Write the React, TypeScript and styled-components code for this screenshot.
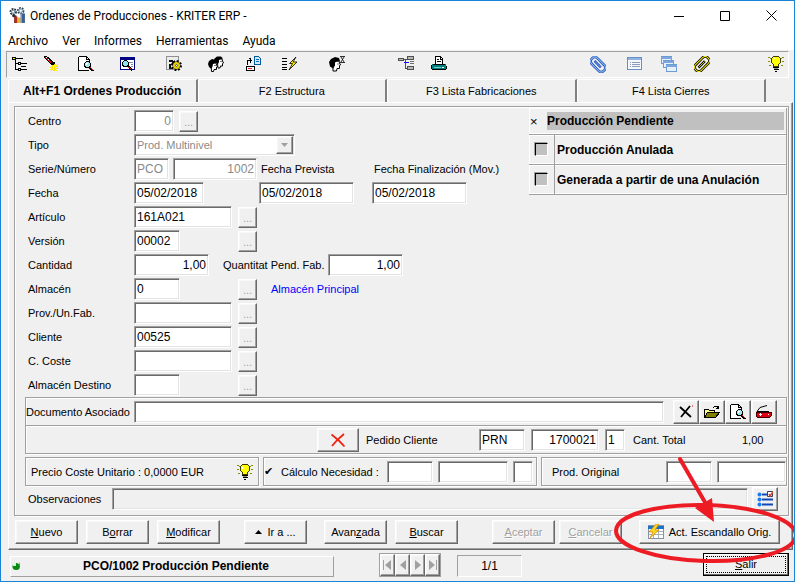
import React from "react";
import styled, { createGlobalStyle, css } from "styled-components";

const GlobalStyle = createGlobalStyle`
  * { box-sizing: border-box; }
  body {
    margin: 0;
    background: #fff;
    color: #000;
    font: 11px/14px "Liberation Sans", Arial, sans-serif;
  }
  button, input, select { font: inherit; color: inherit; margin: 0; }
`;

/* ---------- bevels ---------- */

const raised = css`
  border: 1px solid;
  border-color: #fff #696969 #696969 #fff;
  box-shadow: inset -1px -1px #a0a0a0, inset 1px 1px #f8f8f8;
`;
const sunken = css`
  border: 1px solid;
  border-color: #a0a0a0 #fff #fff #a0a0a0;
  box-shadow: inset 1px 1px #696969, inset -1px -1px #e3e3e3;
`;
const etched = css`
  border: 1px solid #a0a0a0;
  box-shadow: inset 1px 1px #fff, 1px 1px #fff;
`;

/* ---------- window frame ---------- */

const Window = styled.main`
  position: relative;
  overflow: hidden;
  border: 1px solid #1883d7;
  background: #f0f0f0;
`;
const TitleBar = styled.header`
  display: flex;
  align-items: center;
  height: 29px;
  padding-left: 8px;
  background: #fff;
  font: 12px/16px Roboto, "Open Sans", sans-serif;
`;
const Title = styled.h1`
  flex: 1;
  margin: 0 0 0 4px;
  font: inherit;
`;
const CaptionButton = styled.button`
  display: flex;
  align-items: center;
  justify-content: center;
  width: 46px;
  height: 28px;
  padding: 0;
  border: 0;
  background: none;
`;
const MenuBar = styled.nav`
  display: flex;
  gap: 14px;
  height: 20px;
  padding: 2px 7px 0;
  background: #fff;
  font: 12px/16px Roboto, "Open Sans", sans-serif;
`;
const MenuItem = styled.button`
  padding: 0;
  border: 0;
  background: none;
`;

const ToolBar = styled.div`
  display: flex;
  align-items: center;
  height: 27px;
  margin: 1px 5px 0;
  padding: 0 4px 0 5px;
  border: 1px solid;
  border-color: #a0a0a0 #fff #fff #a0a0a0;
`;
const Tool = styled.button<{ $gap: number; $push?: boolean }>`
  display: flex;
  width: 16px;
  height: 18px;
  margin-right: ${(p) => p.$gap}px;
  margin-left: ${(p) => (p.$push ? "auto" : "0")};
  padding: 0;
  border: 0;
  background: none;
`;

/* ---------- tabs ---------- */

const Tabs = styled.div`
  display: flex;
  height: 23px;
  margin: 1px 28px 0 7px;
`;
const Tab = styled.button<{ $active?: boolean }>`
  flex: 1;
  padding: 0;
  border: 0;
  border-top: 1px solid #fff;
  border-left: 1px solid #fff;
  border-right: 2px solid #808080;
  border-radius: 3px 0 0 0;
  background: #f0f0f0;
  font-size: ${(p) => (p.$active ? "12px" : "11px")};
  font-weight: ${(p) => (p.$active ? "bold" : "normal")};
`;
const TabPage = styled.div`
  margin: 0 1px 0 7px;
  padding: 3px 3px 5px 5px;
  border: 1px solid;
  border-color: #fff #696969 #696969 #fff;
  box-shadow: inset -1px -1px #a0a0a0;
`;
const Sheet = styled.section`
  padding: 0 1px 4px 10px;
  ${etched}
`;
const Columns = styled.div`
  display: flex;
  align-items: flex-start;
  justify-content: space-between;
`;

/* ---------- form ---------- */

const FormRows = styled.div`
  padding: 2px 0 0 3px;
`;
const FormRow = styled.div`
  display: flex;
  align-items: center;
  height: 24px;
`;
const RowLabel = styled.label`
  width: 106px;
`;
const Slot = styled.div<{ $width: number }>`
  display: flex;
  gap: 4px;
  width: ${(p) => p.$width}px;
`;
const Label = styled.label<{ $width?: number }>`
  width: ${(p) => (p.$width ? p.$width + "px" : "auto")};
  white-space: nowrap;
`;
const Text = styled.input<{ $w?: number; $right?: boolean }>`
  ${(p) => (p.$w ? `width: ${p.$w}px;` : "flex: 1; min-width: 0;")}
  height: 22px;
  padding: 0 2px;
  ${sunken}
  border-radius: 0;
  outline: 0;
  background: #fff;
  font-size: 12px;
  text-align: ${(p) => (p.$right ? "right" : "left")};
  &:disabled { color: #8a8a8a; }
  &[readonly] { background: #f0f0f0; }
`;
const SelectBox = styled.div`
  position: relative;
  width: 161px;
`;
const Select = styled.select`
  display: block;
  width: 100%;
  height: 22px;
  padding: 0 2px;
  appearance: none;
  border-radius: 0;
  background: #fff;
  ${sunken}
  &:disabled { color: #8a8a8a; opacity: 1; }
`;
const SelectArrow = styled.span`
  position: absolute;
  top: 2px;
  right: 2px;
  bottom: 2px;
  display: flex;
  align-items: center;
  justify-content: center;
  width: 17px;
  background: #f0f0f0;
  pointer-events: none;
  ${raised}
`;
const LookupButton = styled.button`
  width: 19px;
  height: 21px;
  padding: 2px 0 0;
  background: #f0f0f0;
  color: #a0a0a0;
  line-height: 12px;
  ${raised}
`;
const StoreName = styled.output`
  margin-left: 14px;
  color: #00f;
`;

/* ---------- state panel ---------- */

const StatePanel = styled.div`
  width: 258px;
  margin-top: 1px;
  border-right: 1px solid #a0a0a0;
`;
const StateRow = styled.label<{ $head?: boolean }>`
  display: flex;
  align-items: stretch;
  height: ${(p) => (p.$head ? "27px" : "30px")};
  border-bottom: 1px solid #a0a0a0;
  box-shadow: inset 0 -1px #fff, inset 1px 1px #fff;
  font-size: 12px;
  font-weight: bold;
`;
const StateCell = styled.span<{ $line?: boolean }>`
  display: flex;
  align-items: center;
  justify-content: ${(p) => (p.$line ? "center" : "flex-start")};
  width: ${(p) => (p.$line ? "26px" : "18px")};
  border-right: ${(p) => (p.$line ? "1px solid #a0a0a0" : "0")};
`;
const StateText = styled.span<{ $selected?: boolean }>`
  display: flex;
  flex: 1;
  align-items: center;
  margin: 4px 2px 4px 0;
  padding-left: ${(p) => (p.$selected ? "0" : "2px")};
  background: ${(p) => (p.$selected ? "#c0c0c0" : "none")};
`;
const StateCheck = styled.input`
  width: 13px;
  height: 13px;
  margin: 0;
  appearance: none;
  border: 1px solid;
  border-color: #000 #fff #fff #000;
  box-shadow: -1px -1px #a0a0a0;
  background: #c0c0c0;
  &:checked {
    border-color: transparent;
    box-shadow: none;
    background: none;
  }
  &:checked::before {
    content: "×";
    display: block;
    font: 13px/11px "Liberation Sans", sans-serif;
  }
`;

/* ---------- lower blocks ---------- */

const Block = styled.div`
  display: flex;
  align-items: center;
  height: 29px;
  ${etched}
`;
const DocBlock = styled(Block)`
  padding: 0 9px 0 0;
`;
const OrderBlock = styled(Block)`
  justify-content: flex-end;
  margin-top: -1px;
  padding-right: 17px;
`;
const Total = styled.output`
  width: 78px;
  padding-left: 51px;
`;
const Group = styled.div`
  display: flex;
  gap: 4px;
  margin-top: 3px;
`;
const GroupBox = styled(Block)<{ $grow?: boolean; $w?: number }>`
  ${(p) => (p.$grow ? "flex: 1;" : `width: ${p.$w}px;`)}
  gap: 5px;
`;
const Spread = styled.span<{ $indent: number }>`
  flex: 1;
  padding-left: ${(p) => p.$indent}px;
`;
const NeedCheck = styled.input`
  width: 12px;
  height: 12px;
  margin: 0;
  appearance: none;
  &:checked::before {
    content: "✔";
    display: block;
    font: 11px/12px "DejaVu Sans", sans-serif;
  }
`;
const Notes = styled.div`
  display: flex;
  align-items: center;
  gap: 4px;
  margin-top: 1px;
  padding: 0 9px 0 3px;
`;
const IconButton = styled.button<{ $w: number }>`
  display: flex;
  align-items: center;
  justify-content: center;
  width: ${(p) => p.$w}px;
  height: 24px;
  padding: 0;
  background: #f0f0f0;
  ${raised}
`;
const PlainButton = styled.button`
  display: flex;
  width: 16px;
  margin-right: 5px;
  padding: 0;
  border: 0;
  background: none;
`;

/* ---------- actions and status ---------- */

const Actions = styled.div`
  display: flex;
  gap: 24px;
  margin: 4px 9px 0 1px;
`;
const ActionSet = styled.div<{ $gap: number; $push?: boolean }>`
  display: flex;
  gap: ${(p) => p.$gap}px;
  margin-left: ${(p) => (p.$push ? "auto" : "0")};
`;
const Action = styled.button<{ $wide?: boolean }>`
  display: flex;
  align-items: center;
  justify-content: center;
  gap: 5px;
  width: ${(p) => (p.$wide ? "141px" : "63px")};
  height: 24px;
  padding: 0;
  background: #f0f0f0;
  white-space: nowrap;
  ${raised}
  &:disabled { color: #a0a0a0; text-shadow: 1px 1px #fff; }
`;
const StatusBar = styled.footer`
  display: flex;
  align-items: center;
  height: 31px;
  padding: 0 5px 2px 9px;
`;
const StatusText = styled.div`
  display: flex;
  align-items: center;
  flex: 1;
  max-width: 324px;
  height: 21px;
  margin-top: 3px;
  padding: 0 2px 0 1px;
  border: 1px solid;
  border-color: #fff #a0a0a0 #a0a0a0 #fff;
  font-size: 12px;
  font-weight: bold;
  strong { flex: 1; text-align: center; }
`;
const Navigator = styled.div`
  display: flex;
  margin-left: 45px;
  border: 1px solid #a0a0a0;
`;
const NavButton = styled.button`
  display: flex;
  align-items: center;
  justify-content: center;
  width: 15px;
  height: 22px;
  padding: 0;
  background: #f0f0f0;
  ${raised}
`;
const Counter = styled.output`
  width: 65px;
  height: 22px;
  margin: 3px auto 0 16px;
  border: 1px solid;
  border-color: #a0a0a0 #fff #fff #a0a0a0;
  font-size: 12px;
  line-height: 20px;
  text-align: center;
`;
const ExitButton = styled.button`
  width: 86px;
  height: 23px;
  padding: 1px;
  border: 1px solid #000;
  background: #f0f0f0;
  box-shadow: inset -1px -1px #696969, inset 1px 1px #fff;
  span {
    display: block;
    margin: 0 1px;
    border: 1px dotted #000;
    line-height: 15px;
  }
`;
const Callout = styled.svg`
  position: absolute;
  right: -1px;
  bottom: 10px;
  pointer-events: none;
`;

/* ---------- icons ---------- */

type Art = { children: React.ReactNode; size?: number; soft?: boolean };
const Icon = ({ children, size = 16, soft }: Art) => (
  <svg width={size} height={size} viewBox="0 0 16 16" fill="none" stroke="#000" aria-hidden="true"
    shapeRendering={soft ? "auto" : "crispEdges"}>
    {children}
  </svg>
);

const AppIcon = () => (
  <Icon size={17} soft>
    <circle cx="4" cy="4.500" r="2.500" strokeWidth="2" stroke="#24303c" strokeDasharray="1.600 .9" />
    <circle cx="4" cy="4.500" r="1.500" stroke="#7e97a8" />
    <circle cx="11" cy="3.500" r="2.500" strokeWidth="2" stroke="#31485c" strokeDasharray="1.600 .9" />
    <circle cx="11" cy="3.500" r="1.500" stroke="#9ab4c6" />
    <path d="M3 7l4 1v7H5V10L3 9z" fill="#2b2b33" stroke="none" />
    <path d="M5 9h3v6H5z" fill="#b5261e" stroke="none" />
    <path d="M8 10h3v5H8z" fill="#e9b526" stroke="none" />
    <path d="M11 6h4v9h-4z" fill="#3d5f8f" stroke="none" />
    <path d="M11 6h1v9h-1z" fill="#8fb0d6" stroke="none" />
  </Icon>
);
const TreeIcon = () => (
  <Icon>
    <path d="M.5 1.500h3v2h-3zM4 2.500h7M3.500 4v9.500H6M3.500 7.500H6M6.500 6.500h2v2h-2zM9 7.500h6M6.500 12.500h2v2h-2zM9 13.500h6M9 10.500h5" />
    <path d="M1 2.500h2" stroke="#ff0" />
    <path d="M7 7.500h1M7 13.500h1" stroke="#fff" />
  </Icon>
);
const TorchIcon = () => (
  <Icon>
    <path d="M1 0h3v1h2v1h1v1h1v1h1v1h1v4H8V8H7V7H6V6H5V5H4V4H3V3H2V2H1z" fill="#000" stroke="none" />
    <path d="M2 1h2v1h1v1h1v1h1v1h1v2H7V6H6V5H5V4H4V3H3V2H2z" fill="#e01010" stroke="none" />
    <path d="M3 1.500h1M5 3.500h1" stroke="#fff" />
    <path d="M10 6h1v2h-1z" fill="#f0f0f0" stroke="#000" />
    <path d="M11 8.500h2m1 0h1M9 9.500h1m1 0h1m1 0h1M8 10.500h2m1 0h1m1 0h2M7 11.500h1m1 0h1m1 0h2m1 0h1M8 12.500h2m1 0h1m1 0h2M7 13.500h1m1 0h1m1 0h2M8 14.500h1m1 0h2m1 0h1" stroke="#ffe400" />
  </Icon>
);
const Lens = () => (
  <>
    <circle cx="9.500" cy="8.500" r="3" fill="#9fe8ee" />
    <path d="M8 7.500h2M8 8.500h1" stroke="#fff" />
    <path d="M11.500 11l3.500 4" strokeWidth="2" />
    <path d="M12 11.500h1M13 12.500h1M14 13.500h1" stroke="#e02020" />
  </>
);
const PreviewIcon = () => (
  <Icon>
    <path d="M.5.500h8l3 3V6M.5 1v13.500h10M8.500 1v2.500H12" />
    <path d="M1 1h7v13H1z" fill="#fff" stroke="none" />
    <Lens />
  </Icon>
);
const WindowSearchIcon = () => (
  <Icon>
    <path d="M.5 1.500h14v12H.5z" fill="#fff" stroke="#000080" />
    <path d="M0 2.500h15" stroke="#000080" strokeWidth="3" />
    <path d="M9 6.500h4M11 8.500h2M11 10.500h2" stroke="#8090a0" />
    <circle cx="5.500" cy="7.500" r="3" fill="#8ee3ea" />
    <path d="M8 10l4 4.500" strokeWidth="2" />
    <path d="M8 11.500h2M10 12.500h1" stroke="#d02020" />
  </Icon>
);
const GearFormIcon = () => (
  <Icon>
    <path d="M.5.500h12v13H.5z" fill="#ececec" stroke="#909090" />
    <path d="M3 4h4v1h1v3H6V6H3zM3 8h2v4h2v1H3z" fill="#111" stroke="none" />
    <g shapeRendering="auto">
      <circle cx="10.500" cy="9.500" r="4" stroke="#000" strokeWidth="3" strokeDasharray="1.700 1.400" />
      <circle cx="10.500" cy="9.500" r="3.500" stroke="#000" />
      <circle cx="10.500" cy="9.500" r="2.500" stroke="#e8cc00" strokeWidth="2" />
      <circle cx="10.500" cy="9.500" r="1" fill="#fff" strokeWidth=".6" />
    </g>
  </Icon>
);
const FacesIcon = () => (
  <Icon soft>
    <path d="M9 3h5l.5 2 1 2-1 .5V10h-2l-.5 2H10z" fill="#fff" />
    <path d="M6 3l3-2.500h4l2 2-2 .5-2 1v2l-1 2-2-1z" fill="#000" stroke="none" />
    <path d="M3 7h5l.5 2 1 1.500-1 .5v2.500H6l-.5 2H3.500z" fill="#fff" />
    <path d="M0 8l1-3 3-2 4 1 1 2.500-2 .5-2 1-.5 2.500L3.500 13 1 11z" fill="#000" stroke="none" />
    <path d="M12.500 5.500h1M6.500 9.500h1" />
  </Icon>
);
const SendDocIcon = () => (
  <Icon>
    <path d="M9.500.5h4l2 2v6h-6z" fill="#cfe8ff" stroke="#005c9c" />
    <path d="M11 3.500h3M11 5.500h3" stroke="#0068b0" />
    <path d="M2.500 9V4.500H6M4 2.500h1v4M5.500 3v3M6.500 4v1" />
    <path d="M1.500 10.500h8v4h-8z" fill="#fff" />
    <path d="M3 12.500h4" stroke="#e02020" />
  </Icon>
);
const BoltListIcon = () => (
  <Icon>
    <path d="M0 2.500h5M0 5.500h5M0 8.500h5M0 11.500h5M0 13.500h5" />
    <path d="M14 1L7.500 7.500h3L7 14l8-8h-4z" fill="#ffee00" strokeWidth=".8" shapeRendering="auto" />
  </Icon>
);
const HeadTimeIcon = () => (
  <Icon soft>
    <path d="M4 5h6l.5 2 1 2-1 .5v3H8l-.5 2.500H4z" fill="#fff" />
    <path d="M0 6l2-3 4-2 4 1 1 3-3 .5-2 1v3l-2 3-3-2z" fill="#000" stroke="none" />
    <path d="M8.500 8h1" />
    <path d="M11 .5h5M11 6.500h5M12 1l3 5M15 1l-3 5" strokeWidth=".8" />
  </Icon>
);
const SchemeIcon = () => (
  <Icon>
    <path d="M.5 2.500h5v2h-5zM9.500.5h6v3h-6zM9.500 10.500h6v3h-6z" fill="#b8b8b8" stroke="#505050" />
    <path d="M6 3.500h3M7.500 4v8H9" stroke="#505050" />
    <path d="M6 6.500h5" stroke="#1010ff" />
    <path d="M12 5.500h4v2h-4" stroke="#707070" />
  </Icon>
);
const PrinterIcon = () => (
  <Icon>
    <path d="M4.500 8V.5h5l2 2V8" fill="#fff" />
    <path d="M6 3.500h2M6 5.500h4M9.500 1v2H11" />
    <path d="M1 8h14v5H1z" fill="#008080" stroke="none" />
    <path d="M2 8.500h12M0 9v4M.5 10v3M15.500 10v3M1 13.500h14" />
    <path d="M3 11.500h7" stroke="#70d0d0" />
    <path d="M11 11.500h2" stroke="#fff" />
  </Icon>
);
const Clip = ({ dark, light, angle }: { dark: string; light: string; angle: number }) => (
  <g transform={`rotate(${angle} 8 8)`}>
    <rect x="-.5" y="4" width="17" height="8" rx="3.500" stroke={dark} strokeWidth="2.600" />
    <path d="M3 8h9" stroke={dark} strokeWidth="2.400" />
    <rect x="-.5" y="4" width="17" height="8" rx="3.500" stroke={light} strokeWidth="1" />
    <path d="M3.500 8h8" stroke={light} strokeWidth=".8" />
  </g>
);
const BlueClipIcon = () => (
  <Icon size={17} soft><Clip dark="#2050b8" light="#8fbcf2" angle={45} /></Icon>
);
const YellowClipIcon = () => (
  <Icon soft><Clip dark="#000" light="#f8ec00" angle={-45} /></Icon>
);
const ListWindowIcon = () => (
  <Icon>
    <path d="M.5 1.500h14v12H.5z" fill="#f4f8fd" stroke="#6b8fc4" />
    <path d="M1 2.500h13M1 3.500h13" stroke="#8fb2e2" />
    <path d="M3 6.500h1m1 0h8M3 8.500h1m1 0h8M3 10.500h1m1 0h8" stroke="#8b9cb4" />
  </Icon>
);
const CascadeIcon = () => (
  <Icon>
    {[[0, 0], [2, 4], [5, 8]].map(([x, y]) => (
      <g key={x}>
        <path d={`M${x}.5 ${y}.5h10v7h-10z`} fill="#e6f0fb" stroke="#6f9bd4" />
        <path d={`M${x} ${y + 1}.5h11`} stroke="#7ba6de" strokeWidth="2" />
      </g>
    ))}
  </Icon>
);
const BulbIcon = () => (
  <Icon>
    <path d="M0 1.500h2M14 1.500h2M0 5.500h2M14 5.500h2M1 9.500h2M13 9.500h2M2 2.500h1M13 2.500h1" stroke="#8c8c00" />
    <path d="M5.500.5h5l2 2v4l-2 2v2h-5v-2l-2-2v-4z" fill="#ffff00" stroke="#3c3c00" />
    <path d="M6 2.500h1M5.500 3v2" stroke="#fff" />
    <path d="M5 11.500h6M6 13.500h5M7 15.500h2" />
    <path d="M6 12.500h4" stroke="#909090" />
  </Icon>
);
const DeleteIcon = () => (
  <Icon soft><path d="M2 3l11 10M12 2L3 13" strokeWidth="1.800" /><path d="M14 2h1" stroke="#e00" /></Icon>
);
const FolderIcon = () => (
  <Icon>
    <path d="M.5 13.500v-8h4l1 1h5v3" fill="#ffff80" />
    <path d="M.5 13.500l3-5h12l-4 5z" fill="#808000" />
    <path d="M9 3.500l2-1h2l1 2M12 4.500h3M14.500 2v3" />
  </Icon>
);
const ScannerIcon = () => (
  <Icon>
    <path d="M0 8h15v4l-1 1H1l-1-1z" fill="#e00010" stroke="#400" />
    <path d="M1 7.500l3-4 7-2M1 7.500h12" shapeRendering="auto" />
    <path d="M3 10.500h3M4.500 9v3M12 10.500h1" stroke="#fff" />
  </Icon>
);
const RedCrossIcon = () => (
  <Icon soft><path d="M1.500 2.500c4 3 8 6 13 12M14 2C9 6 5 10 2 14" stroke="#ee2211" strokeWidth="1.800" /></Icon>
);
const TaskListIcon = () => (
  <Icon soft>
    <path d="M5 3.500h5M5 8.500h11M5 13.500h11" stroke="#1048b8" strokeWidth="2" />
    <g fill="#1a7cf0" stroke="none"><circle cx="2.500" cy="3.500" r="2" /><circle cx="2.500" cy="8.500" r="2" /><circle cx="2.500" cy="13.500" r="2" /></g>
    <path d="M10.500.500h5v5h-5z" fill="#fff" stroke="#31435c" />
    <path d="M12 3l1 2 3-4" stroke="#e04020" strokeWidth="1.500" />
  </Icon>
);
const GridBoltIcon = () => (
  <Icon>
    <path d="M.5 1.500h15v13H.5z" fill="#fff" stroke="#8494a4" />
    <path d="M0 3h16" stroke="#1874c8" strokeWidth="3" />
    <path d="M1 7.500h14M1 10.500h14M5.500 5v9M10.500 5v9" stroke="#a8b0b8" />
    <path d="M8 0L1 8h4l-3 6 9-8H7l4-6z" fill="#ffd820" stroke="#d08000" strokeWidth=".7" shapeRendering="auto" />
  </Icon>
);
const LedIcon = () => (
  <svg width="9" height="9" viewBox="0 0 9 9" aria-hidden="true">
    <path d="M8 0v6L6 8H4z" fill="#888" />
    <circle cx="4" cy="4.500" r="3.500" fill="#078a12" />
    <path d="M1 1h3v3H1z" fill="#c8ffd0" />
  </svg>
);
const NavGlyph = ({ d }: { d: string }) => (
  <svg width="10" height="12" viewBox="0 0 10 12" fill="#a0a0a0" aria-hidden="true"><path d={d} /></svg>
);

/* ---------- data ---------- */

type ToolDef = [string, number, () => React.JSX.Element];
const leftTools: ToolDef[] = [
  ["Árbol", 15, TreeIcon],
  ["Buscar", 19, TorchIcon],
  ["Vista previa", 26, PreviewIcon],
  ["Consulta", 30, WindowSearchIcon],
  ["Parámetros", 26, GearFormIcon],
  ["Usuarios", 21, FacesIcon],
  ["Enviar", 21, SendDocIcon],
  ["Generar", 31, BoltListIcon],
  ["Pendientes", 53, HeadTimeIcon],
  ["Estructura", 17, SchemeIcon],
  ["Imprimir", 0, PrinterIcon],
];
const rightTools: ToolDef[] = [
  ["Adjuntar", 21, BlueClipIcon],
  ["Lista", 18, ListWindowIcon],
  ["Ventanas", 17, CascadeIcon],
  ["Documentos", 58, YellowClipIcon],
  ["Ayuda rápida", 0, BulbIcon],
];
const lookupRows = [
  { id: "proveedor", label: "Prov./Un.Fab.", value: "", width: 98 },
  { id: "cliente", label: "Cliente", value: "00525", width: 98 },
  { id: "coste", label: "C. Coste", value: "", width: 98 },
  { id: "destino", label: "Almacén Destino", value: "", width: 46 },
];

const LookupRow = (p: { id: string; label: string; value: string; width: number; children?: React.ReactNode }) => (
  <FormRow>
    <RowLabel htmlFor={p.id}>{p.label}</RowLabel>
    <Slot $width={104}><Text id={p.id} $w={p.width} defaultValue={p.value} /></Slot>
    <LookupButton aria-label={`Elegir ${p.label}`}>...</LookupButton>
    {p.children}
  </FormRow>
);

export default function App() {
  return (
    <>
      <GlobalStyle />
      <Window>
        <TitleBar>
          <AppIcon />
          <Title>Ordenes de Producciones - KRITER ERP -</Title>
          <CaptionButton aria-label="Minimizar">
            <svg width="10" height="10"><path d="M0 5.500h10" stroke="#000" /></svg>
          </CaptionButton>
          <CaptionButton aria-label="Maximizar">
            <svg width="10" height="10"><path d="M.5.5h9v9h-9z" stroke="#000" fill="none" /></svg>
          </CaptionButton>
          <CaptionButton aria-label="Cerrar">
            <svg width="11" height="11"><path d="M.5.5l10 10M10.500.5l-10 10" stroke="#000" /></svg>
          </CaptionButton>
        </TitleBar>
        <MenuBar>
          {["Archivo", "Ver", "Informes", "Herramientas", "Ayuda"].map((m) => (
            <MenuItem key={m}>{m}</MenuItem>
          ))}
        </MenuBar>
        <ToolBar role="toolbar">
          {leftTools.map(([name, gap, Glyph]) => (
            <Tool key={name} aria-label={name} $gap={gap}><Glyph /></Tool>
          ))}
          {rightTools.map(([name, gap, Glyph], i) => (
            <Tool key={name} aria-label={name} $gap={gap} $push={i === 0}><Glyph /></Tool>
          ))}
        </ToolBar>

        <Tabs role="tablist">
          <Tab role="tab" aria-selected="true" $active>Alt+F1 Ordenes Producción</Tab>
          <Tab role="tab">F2 Estructura</Tab>
          <Tab role="tab">F3 Lista Fabricaciones</Tab>
          <Tab role="tab">F4 Lista Cierres</Tab>
        </Tabs>

        <TabPage>
          <Sheet>
            <Columns>
              <FormRows>
                <FormRow>
                  <RowLabel htmlFor="centro">Centro</RowLabel>
                  <Slot $width={45}><Text id="centro" $w={40} $right disabled defaultValue="0" /></Slot>
                  <LookupButton aria-label="Elegir centro">...</LookupButton>
                </FormRow>
                <FormRow>
                  <RowLabel htmlFor="tipo">Tipo</RowLabel>
                  <SelectBox>
                    <Select id="tipo" disabled><option>Prod. Multinivel</option></Select>
                    <SelectArrow><svg width="7" height="4"><path d="M0 0h7L3.500 4z" fill="#a0a0a0" /></svg></SelectArrow>
                  </SelectBox>
                </FormRow>
                <FormRow>
                  <RowLabel htmlFor="serie">Serie/Número</RowLabel>
                  <Slot $width={127}>
                    <Text id="serie" $w={35} disabled defaultValue="PCO" />
                    <Text aria-label="Número" $w={84} $right disabled defaultValue="1002" />
                  </Slot>
                  <Label htmlFor="prevista" $width={113}>Fecha Prevista</Label>
                  <Label htmlFor="finalizacion">Fecha Finalización (Mov.)</Label>
                </FormRow>
                <FormRow>
                  <RowLabel htmlFor="fecha">Fecha</RowLabel>
                  <Slot $width={125}><Text id="fecha" $w={70} defaultValue="05/02/2018" /></Slot>
                  <Slot $width={113}><Text id="prevista" $w={95} defaultValue="05/02/2018" /></Slot>
                  <Text id="finalizacion" $w={95} defaultValue="05/02/2018" />
                </FormRow>
                <LookupRow id="articulo" label="Artículo" value="161A021" width={98} />
                <LookupRow id="version" label="Versión" value="00002" width={46} />
                <FormRow>
                  <RowLabel htmlFor="cantidad">Cantidad</RowLabel>
                  <Slot $width={89}><Text id="cantidad" $w={75} $right defaultValue="1,00" /></Slot>
                  <Label htmlFor="pendiente" $width={105}>Quantitat Pend. Fab.</Label>
                  <Text id="pendiente" $w={75} $right defaultValue="1,00" />
                </FormRow>
                <LookupRow id="almacen" label="Almacén" value="0" width={46}>
                  <StoreName>Almacén Principal</StoreName>
                </LookupRow>
                {lookupRows.map((r) => <LookupRow key={r.id} {...r} />)}
              </FormRows>

              <StatePanel>
                <StateRow $head>
                  <StateCell><StateCheck type="checkbox" defaultChecked /></StateCell>
                  <StateText $selected>Producción Pendiente</StateText>
                </StateRow>
                <StateRow>
                  <StateCell $line><StateCheck type="checkbox" /></StateCell>
                  <StateText>Producción Anulada</StateText>
                </StateRow>
                <StateRow>
                  <StateCell $line><StateCheck type="checkbox" /></StateCell>
                  <StateText>Generada a partir de una Anulación</StateText>
                </StateRow>
              </StatePanel>
            </Columns>

            <DocBlock>
              <Label htmlFor="documento" $width={108}>Documento Asociado</Label>
              <Text id="documento" />
              <Slot $width={9} />
              <IconButton $w={26} aria-label="Quitar documento"><DeleteIcon /></IconButton>
              <IconButton $w={26} aria-label="Abrir documento"><FolderIcon /></IconButton>
              <IconButton $w={26} aria-label="Ver documento"><PreviewIcon /></IconButton>
              <IconButton $w={26} aria-label="Escanear"><ScannerIcon /></IconButton>
            </DocBlock>
            <OrderBlock>
              <Slot $width={49}>
                <IconButton $w={42} aria-label="Quitar pedido"><RedCrossIcon /></IconButton>
              </Slot>
              <Label htmlFor="pedido" $width={113}>Pedido Cliente</Label>
              <Slot $width={52}><Text id="pedido" $w={46} defaultValue="PRN" /></Slot>
              <Slot $width={74}><Text aria-label="Número de pedido" $w={68} $right defaultValue="1700021" /></Slot>
              <Slot $width={28}><Text aria-label="Línea de pedido" $w={20} defaultValue="1" /></Slot>
              <Label $width={58}>Cant. Total</Label>
              <Total>1,00</Total>
            </OrderBlock>
            <Group>
              <GroupBox $w={234}>
                <Spread $indent={5}><Label>Precio Coste Unitario : 0,0000 EUR</Label></Spread>
                <PlainButton aria-label="Detalle de coste"><BulbIcon /></PlainButton>
              </GroupBox>
              <GroupBox $w={274}>
                <NeedCheck id="necesidad" type="checkbox" defaultChecked />
                <Label htmlFor="necesidad" $width={101}>Cálculo Necesidad :</Label>
                <Text aria-label="Serie de necesidad" $w={46} />
                <Text aria-label="Número de necesidad" $w={70} />
                <Text aria-label="Línea de necesidad" $w={20} />
              </GroupBox>
              <GroupBox $grow>
                <Spread $indent={10}><Label htmlFor="original">Prod. Original</Label></Spread>
                <Text id="original" $w={46} />
                <Text aria-label="Número original" $w={69} />
              </GroupBox>
            </Group>
            <Notes>
              <Label htmlFor="observaciones" $width={80}>Observaciones</Label>
              <Text id="observaciones" readOnly />
              <IconButton $w={26} aria-label="Editar observaciones"><TaskListIcon /></IconButton>
            </Notes>
          </Sheet>

          <Actions>
            <ActionSet $gap={8}>
              <Action><span><u>N</u>uevo</span></Action>
              <Action><span>B<u>o</u>rrar</span></Action>
              <Action><span><u>M</u>odificar</span></Action>
            </ActionSet>
            <ActionSet $gap={17}>
              <Action>
                <svg width="7" height="4"><path d="M0 4h7L3.500 0z" /></svg>
                Ir a ...
              </Action>
              <ActionSet $gap={8}>
                <Action><span>Avan<u>z</u>ada</span></Action>
                <Action><span><u>B</u>uscar</span></Action>
              </ActionSet>
            </ActionSet>
            <ActionSet $gap={17} $push>
              <ActionSet $gap={4}>
                <Action disabled><span><u>A</u>ceptar</span></Action>
                <Action disabled><span><u>C</u>ancelar</span></Action>
              </ActionSet>
              <Action $wide><GridBoltIcon />Act. Escandallo Orig.</Action>
            </ActionSet>
          </Actions>
        </TabPage>

        <StatusBar>
          <StatusText><LedIcon /><strong>PCO/1002 Producción Pendiente</strong></StatusText>
          <Navigator>
            <NavButton aria-label="Primero"><NavGlyph d="M0 1h1v10H0zM8 1v10L2 6z" /></NavButton>
            <NavButton aria-label="Anterior"><NavGlyph d="M8 1v10L2 6z" /></NavButton>
            <NavButton aria-label="Siguiente"><NavGlyph d="M2 1v10l6-5z" /></NavButton>
            <NavButton aria-label="Último"><NavGlyph d="M1 1v10l6-5zM8 1h1v10H8z" /></NavButton>
          </Navigator>
          <Counter>1/1</Counter>
          <ExitButton><span><u>S</u>alir</span></ExitButton>
        </StatusBar>

        <Callout width="184" height="116" viewBox="611 455 184 116" fill="none" stroke="#ed1c24" aria-hidden="true">
          <ellipse cx="706" cy="533" rx="90" ry="28" strokeWidth="4" transform="rotate(1.500 706 533)" />
          <path d="M680 459l26 45" strokeWidth="4" strokeLinecap="round" />
          <path d="M714 522l-19-14 17-10z" fill="#ed1c24" stroke="none" />
        </Callout>
      </Window>
    </>
  );
}
